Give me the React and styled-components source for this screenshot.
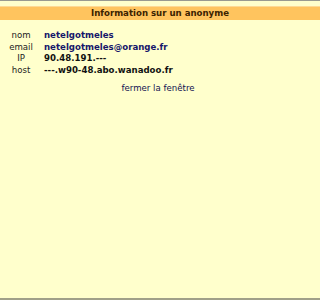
import React from 'react';
import styled, { createGlobalStyle } from 'styled-components';

const Global = createGlobalStyle`
  html, body { margin: 0; padding: 0; background: #ffffcc; }
  body { font-family: "DejaVu Sans", Verdana, sans-serif; }
`;

const Page = styled.div`
  width: 320px;
  height: 300px;
  box-sizing: border-box;
  background: #ffffcc;
  border-top: 1px solid #9a9a90;
  border-bottom: 2px solid #a0a088;
  padding-top: 5px;
  display: flex;
  flex-direction: column;
`;

const TitleBar = styled.div`
  height: 13px;
  background: #ffc45e;
  border-top: 1px solid #ffd994;
  color: #3b2200;
  font-weight: bold;
  font-size: 8.6px;
  line-height: 13px;
  text-align: center;
`;

const Info = styled.div`
  display: grid;
  grid-template-columns: 38px auto;
  column-gap: 4px;
  margin: 10px 0 0 2px;
  font-size: 8.6px;
  line-height: 11.5px;
`;

const Label = styled.div`
  text-align: center;
  color: #222;
`;

const Value = styled.div`
  font-weight: bold;
  color: ${p => p.$blue ? '#16166a' : '#111'};
`;

const Close = styled.a`
  align-self: center;
  margin-top: 7px;
  margin-left: -4px;
  font-size: 8.6px;
  color: #121252;
  text-decoration: none;
`;

export default function App() {
  const rows = [
    ['nom', 'netelgotmeles', true],
    ['email', 'netelgotmeles@orange.fr', true],
    ['IP', '90.48.191.---', false],
    ['host', '---.w90-48.abo.wanadoo.fr', false],
  ];
  return (
    <>
      <Global />
      <Page>
        <TitleBar>Information sur un anonyme</TitleBar>
        <Info>
          {rows.map(([l, v, b]) => (
            <React.Fragment key={l}>
              <Label>{l}</Label>
              <Value $blue={b}>{v}</Value>
            </React.Fragment>
          ))}
        </Info>
        <Close href="#">fermer la fenêtre</Close>
      </Page>
    </>
  );
}
